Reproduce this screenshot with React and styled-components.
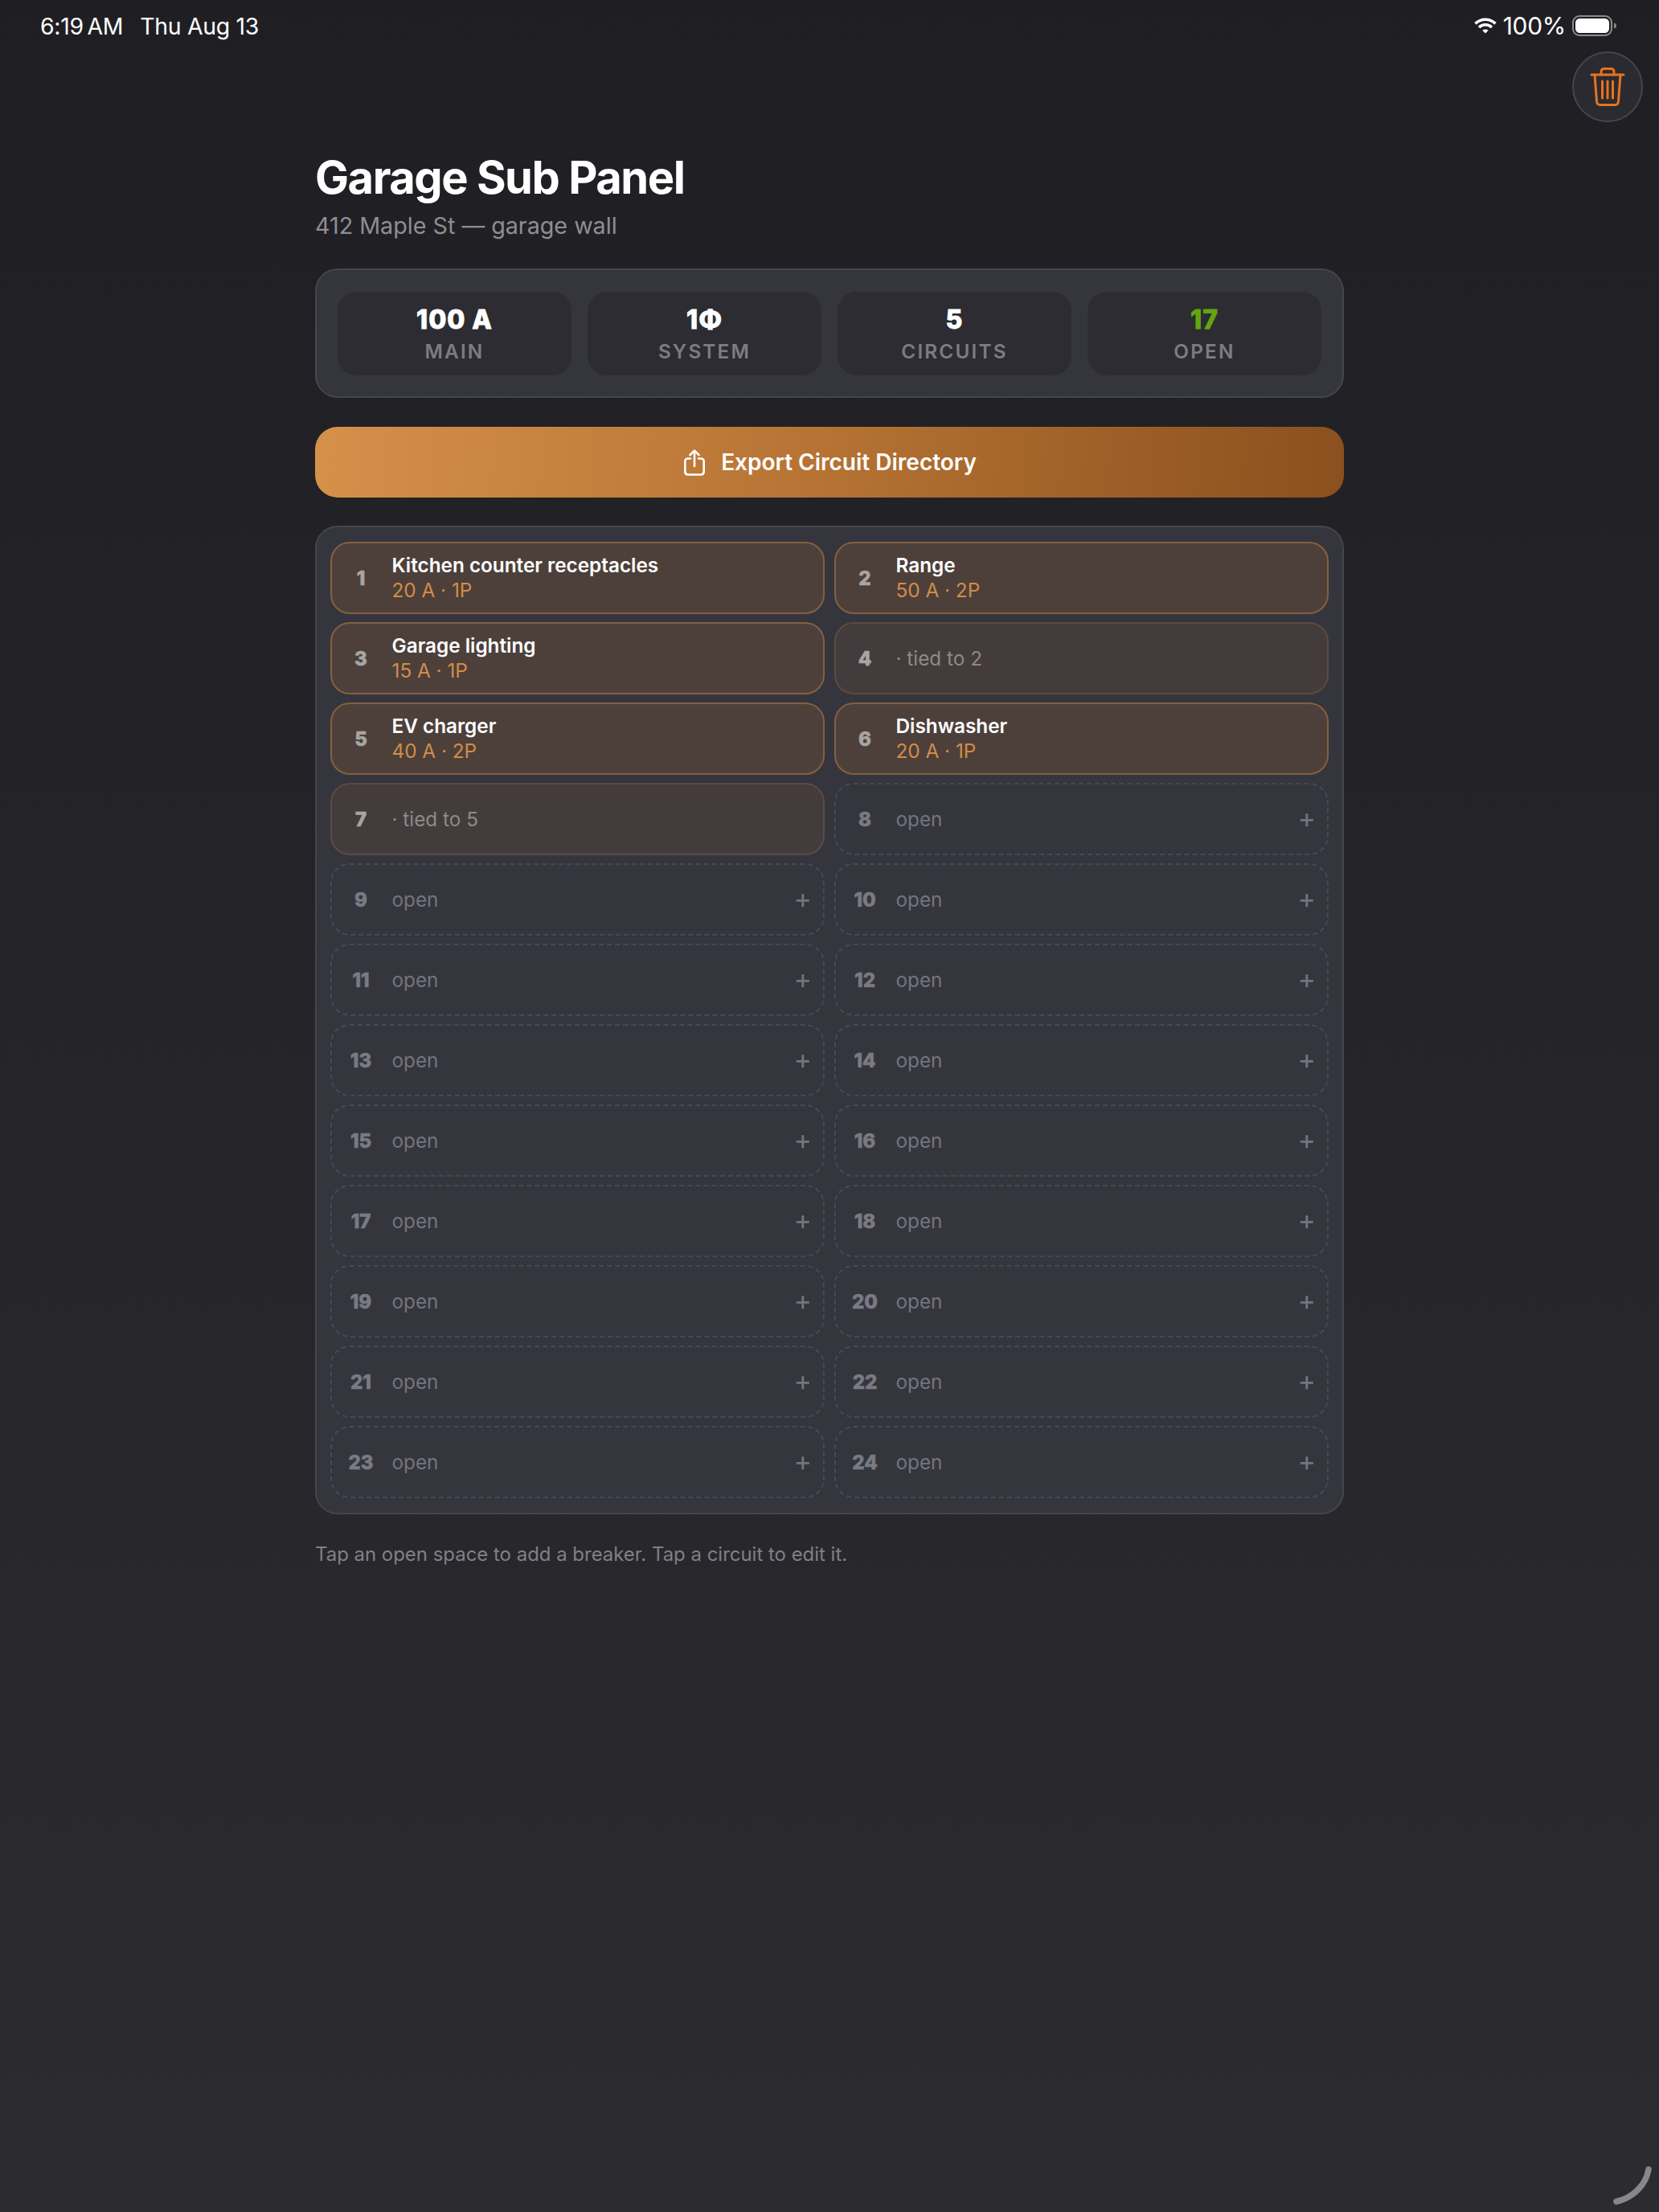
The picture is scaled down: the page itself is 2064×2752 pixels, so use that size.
import React from 'react';
import styled, { createGlobalStyle } from 'styled-components';

const Global = createGlobalStyle`
  html, body { margin: 0; padding: 0; }
  body { background: #1f1f23; font-family: Inter, "Noto Sans", sans-serif; -webkit-font-smoothing: antialiased; }
`;

const Page = styled.div`
  position: relative;
  height: 2752px;
  overflow: hidden;
  box-sizing: border-box;
  background: linear-gradient(180deg, #1f1f23 0%, #2b2b30 100%);
`;

const StatusBar = styled.div`
  height: 64px;
  box-sizing: border-box;
  padding: 0 52px 0 50px;
  display: flex;
  align-items: center;
  justify-content: space-between;
  color: #fff;
  font-weight: 400;
`;
const StatusGroup = styled.div`
  display: flex;
  align-items: center;
  gap: ${p => p.$gap}px;
`;
const StatusText = styled.span`
  font-size: ${p => p.$size}px;
  letter-spacing: -0.01em;
  word-spacing: ${p => p.$tight ? '-3px' : '0'};
  white-space: nowrap;
`;

const TrashButton = styled.button`
  position: absolute;
  top: 64px;
  right: 20px;
  width: 88px;
  height: 88px;
  padding: 0;
  box-sizing: border-box;
  border-radius: 50%;
  background: #2a2a31;
  border: 2px solid #45454d;
  display: flex;
  align-items: center;
  justify-content: center;
`;

const Main = styled.main`
  width: 1280px;
  margin: 0 auto;
  padding-top: 122px;
`;
const Title = styled.h1`
  margin: 0;
  font-size: 56px;
  line-height: 70px;
  font-weight: 700;
  letter-spacing: -0.026em;
  color: #fff;
`;
const Subtitle = styled.p`
  margin: 6px 0 0;
  font-size: 28.7px;
  line-height: 38px;
  color: #8e8e93;
`;

const Card = styled.section`
  box-sizing: border-box;
  background: #35353e;
  border: 2px solid #45454f;
  border-radius: 28px;
`;
const Stats = styled(Card)`
  margin-top: 34px;
  padding: 27px 26px 26px;
  display: grid;
  grid-template-columns: repeat(4, 1fr);
  gap: 20px;
`;
const Stat = styled.div`
  height: 104px;
  background: #2c2c32;
  border-radius: 24px;
  display: flex;
  flex-direction: column;
  align-items: center;
  justify-content: center;
`;
const StatValue = styled.div`
  font-size: 32px;
  line-height: 38px;
  font-weight: 800;
  letter-spacing: 0.03em;
  -webkit-text-stroke: 0.8px currentColor;
  color: ${p => p.$green ? '#63a70f' : '#fff'};
`;
const StatLabel = styled.div`
  margin-top: 5px;
  font-size: 24.3px;
  line-height: 30px;
  font-weight: 600;
  letter-spacing: 0.09em;
  color: #7c7c84;
`;

const ExportButton = styled.button`
  width: 100%;
  height: 88px;
  margin-top: 36px;
  padding: 0 0 0 2px;
  border: 0;
  border-radius: 28px;
  background: linear-gradient(95deg, #d5914a 0%, #b57233 50%, #8a501e 100%);
  color: #fff;
  font: 600 28px/36px Inter, sans-serif;
  display: flex;
  align-items: center;
  justify-content: center;
  gap: 20px;
`;

const Breakers = styled(Card)`
  margin-top: 35px;
  padding: 18px 17px;
  display: grid;
  grid-template-columns: 1fr 1fr;
  column-gap: 12px;
  row-gap: 10px;
`;
const Slot = styled.div`
  box-sizing: border-box;
  height: 90px;
  padding: 0 14px 0 0;
  border-radius: 24px;
  display: flex;
  align-items: center;
  border: 2px ${p => p.$kind === 'open' ? 'dashed #484853' : 'solid'};
  ${p => p.$kind === 'filled' && 'background: #4d403b; border-color: #84603f;'}
  ${p => p.$kind === 'tied' && 'background: #443c3c; border-color: #5d4a40;'}
`;
const SlotNumber = styled.div`
  flex: 0 0 72px;
  margin-right: 2.500px;
  text-align: center;
  font-size: 24px;
  font-weight: 800;
  -webkit-text-stroke: 0.6px currentColor;
  color: ${p => p.$kind === 'open' ? '#7a7a82' : '#a8a5a4'};
`;
const SlotBody = styled.div`
  flex: 1;
  min-width: 0;
`;
const SlotName = styled.div`
  font-size: 24.3px;
  line-height: 31px;
  font-weight: 600;
  color: #fff;
`;
const SlotMeta = styled.div`
  font-size: 24.3px;
  line-height: 31px;
  color: #d28d47;
`;
const SlotNote = styled.div`
  font-size: 24.3px;
  color: ${p => p.$kind === 'open' ? '#74747c' : '#8e8a8a'};
`;
const Plus = styled.span`
  font-size: 34px;
  line-height: 34px;
  padding-bottom: 3px;
  font-weight: 400;
  color: #74747c;
`;

const Hint = styled.p`
  margin: 34px 0 0;
  font-size: 23.95px;
  line-height: 32px;
  color: #808086;
`;

const CornerArc = styled.svg`
  position: absolute;
  right: 0;
  bottom: 0;
`;

const Wifi = () => (
  <svg width="28" height="20" viewBox="0 0 28 20" fill="none" stroke="#fff" strokeWidth="3.6">
    <path d="M1.5 7.4C8.6 .6 19.4 .6 26.5 7.4" />
    <path d="M6 12c4.600-4.300 11.400-4.300 16 0" />
    <path d="M14 19.500 10.300 15.800c2.200-1.800 5.200-1.800 7.400 0z" fill="#fff" stroke="none" />
  </svg>
);

const Battery = () => (
  <svg width="56" height="26" viewBox="0 0 56 26" fill="none">
    <rect x="1" y="1" width="48" height="24" rx="8" stroke="#8c8c8e" strokeWidth="2" />
    <rect x="4" y="4" width="42" height="18" rx="5.500" fill="#fff" />
    <path d="M52 9.500c2 .5 3 2 3 3.500s-1 3-3 3.500z" fill="#8c8c8e" />
  </svg>
);

const Trash = () => (
  <svg width="44" height="50" viewBox="0 0 44 50" fill="none" stroke="#e8731c" strokeWidth="3" strokeLinecap="round" strokeLinejoin="round">
    <path d="M2 10h40" />
    <path d="M14 10V6.500C14 4 15.500 2.500 18 2.500h8c2.500 0 4 1.500 4 4V10" />
    <path d="M6 10l2.500 33c.2 2.800 1.800 4.500 4.500 4.500h18c2.700 0 4.300-1.700 4.500-4.500L38 10" />
    <path d="M15.500 18v21M22 18v21M28.500 18v21" />
  </svg>
);

const Share = () => (
  <svg width="26" height="33" viewBox="0 0 26 33" fill="none" stroke="#fff" strokeWidth="2.600" strokeLinecap="round" strokeLinejoin="round">
    <path d="M8 11.500H5c-2.400 0-3.700 1.300-3.700 3.700v12.600c0 2.400 1.300 3.700 3.700 3.700h16c2.400 0 3.700-1.300 3.700-3.700V15.200c0-2.400-1.300-3.700-3.700-3.700h-3" />
    <path d="M13 21V2" />
    <path d="M7.500 7 13 1.600 18.500 7" />
  </svg>
);

const stats = [
  { value: '100 A', label: 'MAIN' },
  { value: '1Φ', label: 'SYSTEM' },
  { value: '5', label: 'CIRCUITS' },
  { value: '17', label: 'OPEN', green: true },
];

const used = {
  1: { name: 'Kitchen counter receptacles', meta: '20 A · 1P' },
  2: { name: 'Range', meta: '50 A · 2P' },
  3: { name: 'Garage lighting', meta: '15 A · 1P' },
  4: { tied: 2 },
  5: { name: 'EV charger', meta: '40 A · 2P' },
  6: { name: 'Dishwasher', meta: '20 A · 1P' },
  7: { tied: 5 },
};

const slots = Array.from({ length: 24 }, (_, i) => {
  const n = i + 1;
  const u = used[n];
  return { n, u, kind: !u ? 'open' : u.tied ? 'tied' : 'filled' };
});

export default function App() {
  return (
    <Page>
      <Global />
      <StatusBar>
        <StatusGroup $gap={21}>
          <StatusText $size={28.4} $tight>6:19 AM</StatusText>
          <StatusText $size={28.4}>Thu Aug 13</StatusText>
        </StatusGroup>
        <StatusGroup $gap={8}>
          <Wifi />
          <StatusText $size={30}>100%</StatusText>
          <Battery />
        </StatusGroup>
      </StatusBar>
      <TrashButton aria-label="Delete panel"><Trash /></TrashButton>
      <Main>
        <Title>Garage Sub Panel</Title>
        <Subtitle>412 Maple St — garage wall</Subtitle>
        <Stats>
          {stats.map(s => (
            <Stat key={s.label}>
              <StatValue $green={s.green}>{s.value}</StatValue>
              <StatLabel>{s.label}</StatLabel>
            </Stat>
          ))}
        </Stats>
        <ExportButton><Share />Export Circuit Directory</ExportButton>
        <Breakers>
          {slots.map(({ n, u, kind }) => (
            <Slot key={n} $kind={kind}>
              <SlotNumber $kind={kind}>{n}</SlotNumber>
              <SlotBody>
                {kind === 'filled' && <SlotName>{u.name}</SlotName>}
                {kind === 'filled' && <SlotMeta>{u.meta}</SlotMeta>}
                {kind === 'tied' && <SlotNote $kind={kind}>· tied to {u.tied}</SlotNote>}
                {kind === 'open' && <SlotNote $kind={kind}>open</SlotNote>}
              </SlotBody>
              {kind === 'open' && <Plus>+</Plus>}
            </Slot>
          ))}
        </Breakers>
        <Hint>Tap an open space to add a breaker. Tap a circuit to edit it.</Hint>
      </Main>
      <CornerArc width="64" height="64" viewBox="0 0 64 64" fill="none">
        <path d="M51 11C48 30 32 46 11 51" stroke="#87878c" strokeWidth="7.500" strokeLinecap="round" />
      </CornerArc>
    </Page>
  );
}
